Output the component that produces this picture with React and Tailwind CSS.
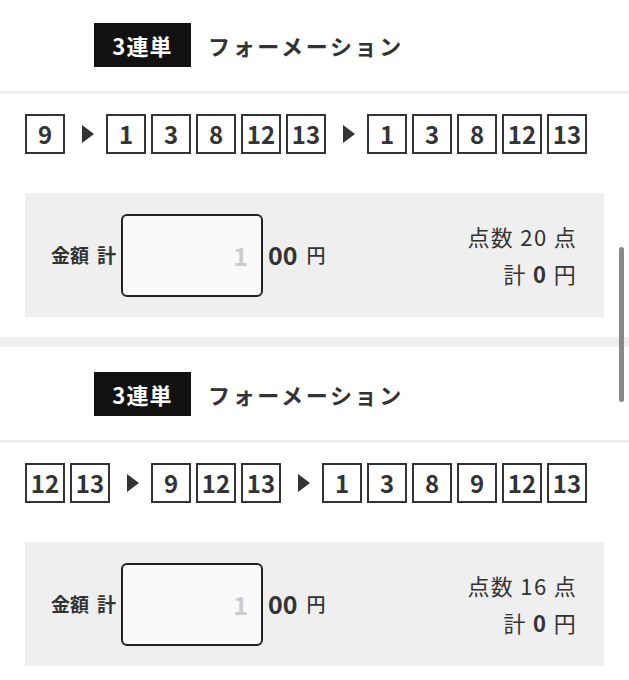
import React from 'react';

const FONT = { fontFamily: '"Noto Sans CJK JP", "Noto Sans", sans-serif' };

const sections = [
  { first: ['9'], second: ['1', '3', '8', '12', '13'], third: ['1', '3', '8', '12', '13'], points: 20 },
  { first: ['12', '13'], second: ['9', '12', '13'], third: ['1', '3', '8', '9', '12', '13'], points: 16 },
];

const Arrow = () => (
  <svg width="12" height="18" viewBox="0 0 12 18" className="ml-[17px] mr-[12px] shrink-0">
    <path d="M0 0 L12 9 L0 18 Z" fill="#333" />
  </svg>
);

const NumBox = ({ n }) => (
  <div className="w-10 h-10 border-2 border-[#333] flex items-center justify-center text-[24px] font-bold text-[#333] leading-none shrink-0">
    {n}
  </div>
);

const Group = ({ nums }) => (
  <div className="flex gap-[5px]">
    {nums.map((n, i) => <NumBox key={i} n={n} />)}
  </div>
);

const Section = ({ data, first }) => (
  <div className={first ? '' : 'border-t-[10px] border-[#efefef]'}>
    <div className="flex items-center pl-[94px] pt-[25px] pb-[24px] border-b-[3px] border-[#eeeeee]">
      <div className="w-[97px] h-[44px] bg-[#111] text-white flex items-center justify-center text-[22px] font-bold tracking-[0.05em]">
        3連単
      </div>
      <div className="ml-[17px] text-[22px] font-bold text-[#333] tracking-[0.12em]">
        フォーメーション
      </div>
    </div>

    <div className="flex items-center px-[25px] pt-[20px]">
      <Group nums={data.first} />
      <Arrow />
      <Group nums={data.second} />
      <Arrow />
      <Group nums={data.third} />
    </div>

    <div className="mx-[25px] mt-[39px] mb-[20px] h-[124px] bg-[#efefef] flex items-center justify-between pl-[26px] pr-[27px]">
      <div className="flex items-center">
        <span className="text-[19px] font-bold text-[#333]">金額</span>
        <span className="ml-[8px] mr-[5px] text-[19px] font-bold text-[#333]">計</span>
        <input
          readOnly
          placeholder="1"
          className="w-[142px] h-[83px] border-2 border-[#222] rounded-[6px] bg-[#fafafa] text-right pr-[13px] text-[25px] font-bold text-[#333] placeholder:text-[#ccc] outline-none"
        />
        <span className="ml-[5px] text-[25px] font-bold text-[#333]">00</span>
        <span className="ml-[9px] text-[19px] font-medium text-[#333]">円</span>
      </div>
      <div className="flex flex-col items-end text-[22px] text-[#333] tracking-[0.06em] leading-[37px]">
        <div>点数 {data.points} 点</div>
        <div>計 <span className="font-bold">0</span> 円</div>
      </div>
    </div>
  </div>
);

export default function App() {
  return (
    <div className="relative bg-white min-h-screen overflow-hidden" style={FONT}>
      <div className="-mt-[2px]">
        {sections.map((s, i) => (
          <Section key={i} data={s} first={i === 0} />
        ))}
      </div>
      <div className="absolute right-[5px] top-[247px] w-[5px] h-[155px] rounded-full bg-[#888]" />
    </div>
  );
}
